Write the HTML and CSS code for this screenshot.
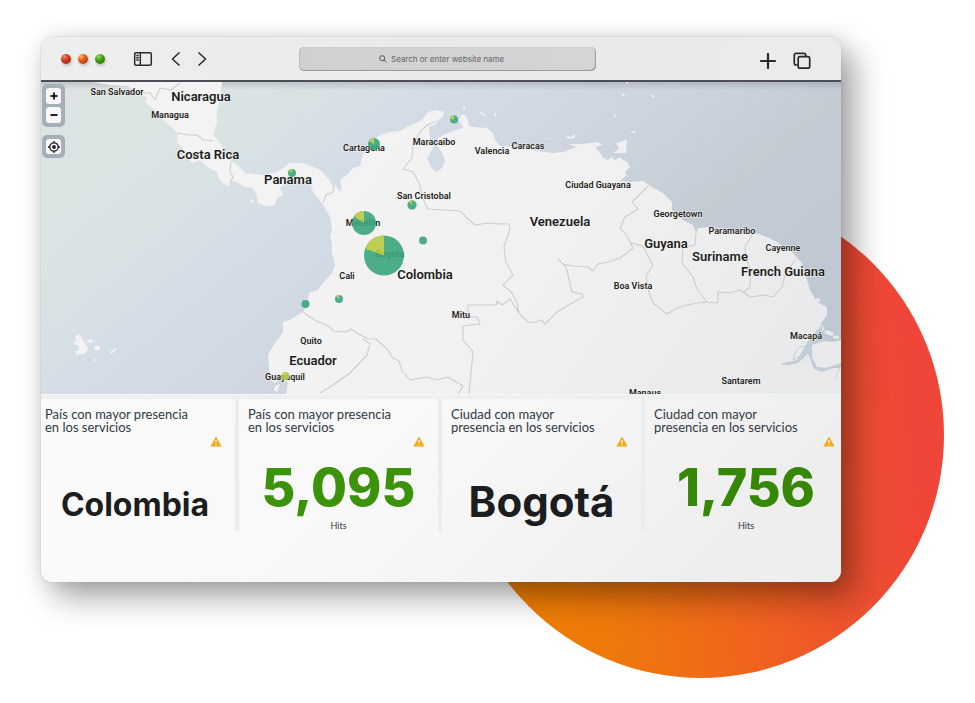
FILE: index.html
```html
<!DOCTYPE html>
<html lang="es">
<head>
<meta charset="utf-8">
<meta name="viewport" content="width=device-width, initial-scale=1">
<title>Presencia en los servicios</title>
<link rel="stylesheet" href="styles.css">
</head>
<body>
<main class="stage">
  <div class="disc"></div>
  <div class="window">
    <header class="toolbar">
      <div class="dots"><span class="dot red"></span><span class="dot orange"></span><span class="dot green"></span></div>
      <button class="icon-btn sidebar-btn" aria-label="Sidebar">
        <svg width="20" height="16" viewBox="0 0 20 16"><rect x="1.7" y="1.7" width="16.6" height="12.6" rx="1.2"/><path d="M7.3 2v12M3.3 4.5h2.4M3.3 6.7h2.4M3.3 8.9h2.4"/></svg>
      </button>
      <div class="nav">
        <button class="icon-btn" aria-label="Back"><svg width="10" height="16" viewBox="0 0 10 16"><path d="M8.500 1.500L1.500 8l7 6.500"/></svg></button>
        <button class="icon-btn" aria-label="Forward"><svg width="10" height="16" viewBox="0 0 10 16"><path d="M1.500 1.500L8.500 8l-7 6.500"/></svg></button>
      </div>
      <label class="search">
        <svg width="8" height="8" viewBox="0 0 8 8"><circle cx="3.200" cy="3.200" r="2.500"/><path d="M5 5l2.500 2.500"/></svg>
        <input type="text" placeholder="Search or enter website name" aria-label="Search or enter website name">
      </label>
      <div class="tools">
        <button class="icon-btn bold" aria-label="New tab"><svg width="16" height="16" viewBox="0 0 16 16"><path d="M8 1v14M1 8h14"/></svg></button>
        <button class="icon-btn bold thin" aria-label="Tabs"><svg width="18" height="18" viewBox="0 0 18 18"><path d="M4.500 13H3a1.700 1.700 0 0 1-1.700-1.700V3A1.700 1.700 0 0 1 3 1.300h8A1.700 1.700 0 0 1 12.700 3v1.500"/><rect x="5.200" y="4.700" width="11.500" height="11.500" rx="1.700"/></svg></button>
      </div>
    </header>

    <section class="map">
      <svg class="map-canvas" viewBox="41 82 800 312" role="img" aria-label="Mapa de hits por ciudad">
        <defs>
          <linearGradient id="ground" gradientUnits="userSpaceOnUse" x1="300" y1="100" x2="760" y2="420">
            <stop offset="0" stop-color="#f3f3f3"/><stop offset=".5" stop-color="#f1f1f1"/><stop offset="1" stop-color="#e8e9eb"/>
          </linearGradient>
        </defs>
        <path class="land" d="M93 82L110 85 127 86 138 92 147 98 145 102 155 110 165 122 173 128 178 134 177 142 182 147 187 158 193 163 200 160 207 167 217 172 218 178 223 183 229 187 230 180 237 182 245 187 252 188 257 195 258 203 265 206 275 205 277 198 283 195 280 188 287 182 293 180 303 183 311 182 312 190 323 205 330 217 332 230 330 237 332 243 332 253 335 265 332 273 323 283 318 290 309 293 308 303 303 312 290 320 283 322 283 332 275 343 268 355 269 367 270 380 275 383 280 378 285 380 288 383 286 394H841V340L832 342 823 341 818 333 821 324 827 315 827 307 817 302 810 290 805 273 802 263 797 258 793 253 787 250 777 242 767 237 753 232 733 230 710 227 698 228 696 233 693 225 683 220 672 210 672 202 663 193 650 186 643 181 630 182 620 181 627 175 625 172 630 167 627 162 623 160 620 157 615 160 611 157 608 160 603 158 600 153 595 147 603 145 597 142 583 144 568 144 577 147 563 152 553 153 537 151 517 147 500 146 495 140 493 133 487 128 473 127 469 126 467 117 462 114 459 120 463 128 453 131 443 135 436 140 437 145 442 153 445 160 443 167 437 172 432 169 427 158 432 150 434 145 430 140 429 127 435 125 438 120 443 117 444 112 437 110 428 112 422 120 407 127 400 131 390 132 380 135 370 142 365 150 362 158 360 166 353 168 347 175 340 180 342 188 340 192 335 185 327 177 320 170 313 167 303 163 290 163 277 172 263 175 253 174 245 173 240 167 232 162 225 153 220 143 213 135 217 122 217 112 220 100 222 82Z"/>
        <g class="land">
          <path d="M75 336l4-2 4 6 4 6 1 4-4 4-8 1-1-4 4-1-2-6z"/>
          <ellipse cx="76" cy="343" rx="2.500" ry="2"/><ellipse cx="90" cy="341" rx="3" ry="1.500"/><ellipse cx="97" cy="348" rx="3" ry="2.500"/><path d="M110 352l6-4 1 1-6 5z"/><circle cx="95" cy="360" r="1"/>
          <path d="M463 106l3 3-1 1-2-2zM480 111l6 4 0 1-5-2zM494 112l3 3-2 2zM547 138l4 0-1 1zM566 136l5 1 4-3 0 4-6 1zM616 143l11-3-1 13-13 0 6-4zM626 82h2v3zM622 93l3 1-2 3zM651 93l4 4-2 1zM613 118l3-5 0 3zM630 133l6-3-2 3zM251 199l3 2-1 2-3-1zM275 386l5-2-3 8-3-2z"/>
          <ellipse cx="818" cy="300" rx="2" ry="2"/><ellipse cx="829" cy="333" rx="5" ry="2" transform="rotate(20 829 333)"/><ellipse cx="822" cy="328" rx="2" ry="3"/><ellipse cx="836" cy="337" rx="3" ry="1.500"/>
        </g>
        <path class="river" d="M823 325L815 332 808 341 803 350 797 360 779 364 788 365 798 363 808 354 810 358 814 369 822 372 833 368 839 368 833 384 841 366 841 363 826 368 817 367 812 357 812 345 824 341 821 334Z"/>
        <path class="islet" d="M801 346q-6 4-8 14l7-4 5-9z"/>
        <path class="border" d="M435 122L427 125 420 132 413 145 412 158 403 169 413 172 420 185 422 197 428 209 443 210 460 211 467 218 475 225 488 223 500 224 509 224 510 229 504 247 506 262 513 275 503 285 512 293 517 303 519 313 528 322 533 323 541 320 545 324 557 312 572 303 583 297 582 294 572 292 568 275 566 267 558 259 563 264 573 266 588 267 593 271 598 264 608 262 620 258 633 248 627 236 620 228 625 217 638 209 632 202 636 198 648 186"/>
        <path class="border" d="M631 243L643 246 647 254 653 265 646 276 649 292 653 303 667 314 675 309 687 305 703 302 718 303 718 292 730 293 740 290 750 297 764 295 773 297 782 287 785 275 795 260M696 233L695 245 683 247 682 263 693 277 697 289 707 302M753 233L745 247 746 259 751 270 750 287 743 293"/>
        <path class="border" d="M519 313L515 307 510 299 502 305 497 301 496 305H468V317H477L480 324 463 326 463 340 473 352 471 373 469 394M303 312L315 320 330 327 333 331 347 332 351 329 357 333 368 339 376 339 387 349 393 358 399 361 402 371 410 380 427 377 437 380 448 377 463 386 458 394M363 339L370 344 367 355 350 373 330 387 320 393M330 181L334 186 333 192 326 195 323 203M178 133L188 135 197 135 204 140 213 141M231 162L230 172 233 177 231 181M143 93L150 93 155 100 160 88 171 90 180 83"/>
        <g class="country">
          <text x="201" y="101">Nicaragua</text><text x="208" y="159">Costa Rica</text><text x="288" y="184">Panama</text><text x="560" y="226">Venezuela</text><text x="666" y="248">Guyana</text><text x="720" y="261">Suriname</text><text x="783" y="276">French Guiana</text><text x="425" y="279">Colombia</text><text x="313" y="365">Ecuador</text>
        </g>
        <g class="city">
          <text x="117" y="95">San Salvador</text><text x="170" y="118">Managua</text><text x="364" y="151">Cartagena</text><text x="434" y="145">Maracaibo</text><text x="492" y="154">Valencia</text><text x="528" y="149">Caracas</text><text x="424" y="199">San Cristobal</text><text x="598" y="188">Ciudad Guayana</text><text x="678" y="217">Georgetown</text><text x="732" y="234">Paramaribo</text><text x="783" y="251">Cayenne</text><text x="633" y="289">Boa Vista</text><text x="461" y="318">Mitu</text><text x="347" y="279">Cali</text><text x="363" y="226">Medellin</text><text x="390" y="257">Bogota</text><text x="311" y="344">Quito</text><text x="285" y="380">Guayaquil</text><text x="806" y="339">Macapá</text><text x="741" y="384">Santarem</text><text x="645" y="396">Manaus</text>
        </g>
        <g class="pies">
          <circle cx="384" cy="255.500" r="20"/><path d="M384 255.500V235.500A20 20 0 0 0 365.200 248.700Z"/>
          <circle cx="364" cy="223" r="12"/><path d="M364 223V211A12 12 0 0 0 354 216.400Z"/>
          <circle cx="374" cy="144" r="6"/><path d="M374 144V138A6 6 0 0 0 369 140.700Z"/>
          <circle cx="454" cy="119.500" r="4"/><path d="M454 119.500V115.500A4 4 0 0 0 450 119Z"/>
          <circle cx="292" cy="173" r="4"/><path d="M292 173V169A4 4 0 0 0 289 170.500Z"/>
          <circle cx="412" cy="205" r="4.700"/><path d="M412 205V200.300A4.700 4.700 0 0 0 409 201.400Z"/>
          <circle cx="339" cy="299" r="4"/><path d="M339 299V295A4 4 0 0 0 336 296.500Z"/>
          <circle cx="423" cy="240.500" r="4"/><circle cx="305.500" cy="304" r="4"/>
          <circle class="lime" cx="285.500" cy="376" r="4"/>
        </g>
      </svg>
      <div class="controls">
        <div class="control-group">
          <button aria-label="Zoom in"><svg width="8" height="8" viewBox="0 0 8 8"><path d="M4 .5v7M.5 4h7"/></svg></button>
          <button aria-label="Zoom out"><svg width="8" height="8" viewBox="0 0 8 8"><path d="M.5 4h7"/></svg></button>
        </div>
        <div class="control-group">
          <button class="locate" aria-label="Locate"><svg width="12" height="12" viewBox="0 0 12 12"><circle cx="6" cy="6" r="4.200"/><path d="M6 0v2M6 10v2M0 6h2M10 6h2"/><circle class="core" cx="6" cy="6" r="1.900"/></svg></button>
        </div>
      </div>
    </section>

    <section class="cards">
      <article class="card first">
        <h2>País con mayor presencia en los servicios</h2>
        <svg class="warn" width="12" height="11" viewBox="0 0 12 11"><path d="M6 .5L11.700 10.500H.3z"/><path class="mark" d="M6 4v3M6 8v1.300"/></svg>
        <p class="value name">Colombia</p>
      </article>
      <article class="card">
        <h2>País con mayor presencia en los servicios</h2>
        <svg class="warn" width="12" height="11" viewBox="0 0 12 11"><path d="M6 .5L11.700 10.500H.3z"/><path class="mark" d="M6 4v3M6 8v1.300"/></svg>
        <p class="value count">5,095</p>
        <p class="unit">Hits</p>
      </article>
      <article class="card">
        <h2>Ciudad con mayor presencia en los servicios</h2>
        <svg class="warn" width="12" height="11" viewBox="0 0 12 11"><path d="M6 .5L11.700 10.500H.3z"/><path class="mark" d="M6 4v3M6 8v1.300"/></svg>
        <p class="value name city-name">Bogotá</p>
      </article>
      <article class="card last">
        <h2>Ciudad con mayor presencia en los servicios</h2>
        <svg class="warn" width="12" height="11" viewBox="0 0 12 11"><path d="M6 .5L11.700 10.500H.3z"/><path class="mark" d="M6 4v3M6 8v1.300"/></svg>
        <p class="value count">1,756</p>
        <p class="unit">Hits</p>
      </article>
    </section>
  </div>
</main>
</body>
</html>
```
FILE: styles.css
```css
* { box-sizing: border-box; }
body { margin: 0; background: #fff; font-family: Lato, "Liberation Sans", sans-serif; }
h2, p { margin: 0; }
button { border: 0; padding: 0; background: none; display: flex; align-items: center; justify-content: center; }

.stage { position: relative; min-height: 100vh; padding: 37px 134px 120px 41px; overflow: hidden; }
.disc {
  position: absolute; top: 192px; right: 31px; width: 486px; height: 486px; border-radius: 50%;
  background: linear-gradient(84deg, #ef8100 8%, #ee770c 32%, #f06120 58%, #ed5130 76%, #f04539 90%);
}
.window {
  position: relative; border-radius: 11px; padding-bottom: 51px;
  background: linear-gradient(135deg, #fafafa 30%, #f8f8f8 60%, #eee 88%);
  box-shadow: 0 0 1px #888, 0 0 20px rgba(0, 0, 0, .09), 13px 15px 32px rgba(0, 0, 0, .36);
}

.toolbar {
  display: flex; align-items: center; height: 45px; padding: 0 30px 0 20px;
  border-radius: 11px 11px 0 0; border-bottom: 2px solid #4d4d56;
  background: linear-gradient(100deg, #eee, #e8e9ea 60%, #ebebec);
}
.dots { display: flex; gap: 7px; }
.dot { width: 10px; height: 10px; border-radius: 50%; box-shadow: 1px 2px 3px rgba(0, 0, 0, .2); }
.red { background: radial-gradient(circle at 35% 25%, #f58a70, #d03a20 40%, #7d2413); }
.orange { background: radial-gradient(circle at 30% 25%, #ffb070, #e65a14 40%, #8a3010); }
.green { background: radial-gradient(circle at 35% 25%, #98dc70, #43a013 40%, #216505); }
.icon-btn svg { fill: none; stroke: #2a2a2c; stroke-width: 1.5; }
.bold svg { stroke-width: 2.2; stroke-linecap: round; }
.thin svg { stroke-width: 1.7; }
.sidebar-btn { margin-left: 28px; }
.nav { display: flex; gap: 16px; margin-left: 18px; }
.search {
  display: flex; align-items: center; gap: 4px; flex: 0 1 297px; height: 24px; margin-left: 92px; padding: 0 0 0 80px;
  border-radius: 5px; background: linear-gradient(90deg, #d0d0d0, #d5d5d5);
  box-shadow: inset -1px -1px 1px #999, inset 1px 0 1px #bbb;
}
.search svg { flex: none; fill: none; stroke: #555; stroke-width: 1; }
.search input { flex: 1; min-width: 0; border: 0; padding: 0; background: none; outline: 0; font: 8px/12px Inter, sans-serif; color: #555; }
.search input::placeholder { color: #666; opacity: 1; }
.tools { display: flex; align-items: center; gap: 17px; margin-left: auto; padding-top: 4px; }

.map {
  position: relative; border-bottom: 1px solid #f7f7f7;
  background: linear-gradient(rgba(70, 75, 95, .2), rgba(70, 75, 95, 0) 8px),
    linear-gradient(140deg, #dde3e3 0, #dae3e3 20%, #d3dce6 36%, #cfd6e1 50%, #c9d1da 60%, #c3cbd3 70%, #bdc7d3 100%);
}
.map-canvas { display: block; width: 100%; height: auto; }
.land, .islet { fill: url(#ground); }
.islet { stroke: #c3ccd6; stroke-width: 1; }
.river { fill: #c2ccd6; }
.border { fill: none; stroke: #cccdce; stroke-width: 1.1; stroke-linejoin: round; }
.country, .city { font-family: Roboto, sans-serif; fill: #1d1e20; text-anchor: middle; paint-order: stroke; stroke: #f4f4f4; stroke-width: 1; }
.country { font-size: 13px; font-weight: 600; }
.city { font-size: 9px; font-weight: 600; }
.pies { fill: #3da67e; opacity: .9; }
.pies path, .pies .lime { fill: #b9cb43; }

.controls { position: absolute; top: 2px; left: 1px; display: grid; gap: 8px; }
.control-group { display: grid; gap: 3px; padding: 4px; border-radius: 5px; background: #a6afb7; }
.controls button { width: 15px; height: 16px; border-radius: 3px; background: #f8f8f8; }
.controls button.locate { height: 15px; }
.controls svg { fill: none; stroke: #202124; stroke-width: 2; }
.controls .locate svg { stroke-width: 1.3; }
.controls .core { fill: #202124; stroke: none; }

.cards { display: grid; grid-template-columns: 198fr 203fr 203fr 196fr; border-top: 4px solid #edf0f1; }
.card { display: grid; grid-template-rows: 35px 12px 85px; position: relative; border-right: 4px solid #eaecee; }
.card.last { border-right: 0; }
.card h2 { max-width: 160px; padding: 9px 0 0 9px; font-size: 13px; line-height: 13px; font-weight: 400; color: #303a43; }
.card.first h2 { max-width: 155px; padding-left: 4px; }
.warn { justify-self: end; margin: 2px 13px 0 0; fill: #f2ab1e; }
.last .warn { margin-right: 6px; }
.mark { stroke: #fff4d0; stroke-width: 1.4; }
.value { font-family: Inter, sans-serif; text-align: center; font-weight: 700; white-space: nowrap; }
.name { padding-top: 39px; font-size: 32px; line-height: 40px; color: #1c1d1e; }
.first .name { padding-right: 6px; }
.city-name { padding-top: 31px; font-size: 42px; line-height: 50px; }
.count { padding-top: 12px; font-size: 52px; line-height: 60px; font-weight: 800; color: #3c920b; }
.last .count { color: #378706; }
.last .count, .last .unit { padding-left: 6px; }
.unit { position: absolute; bottom: 0; width: 100%; text-align: center; font-size: 9px; line-height: 11px; color: #303a43; }
```
